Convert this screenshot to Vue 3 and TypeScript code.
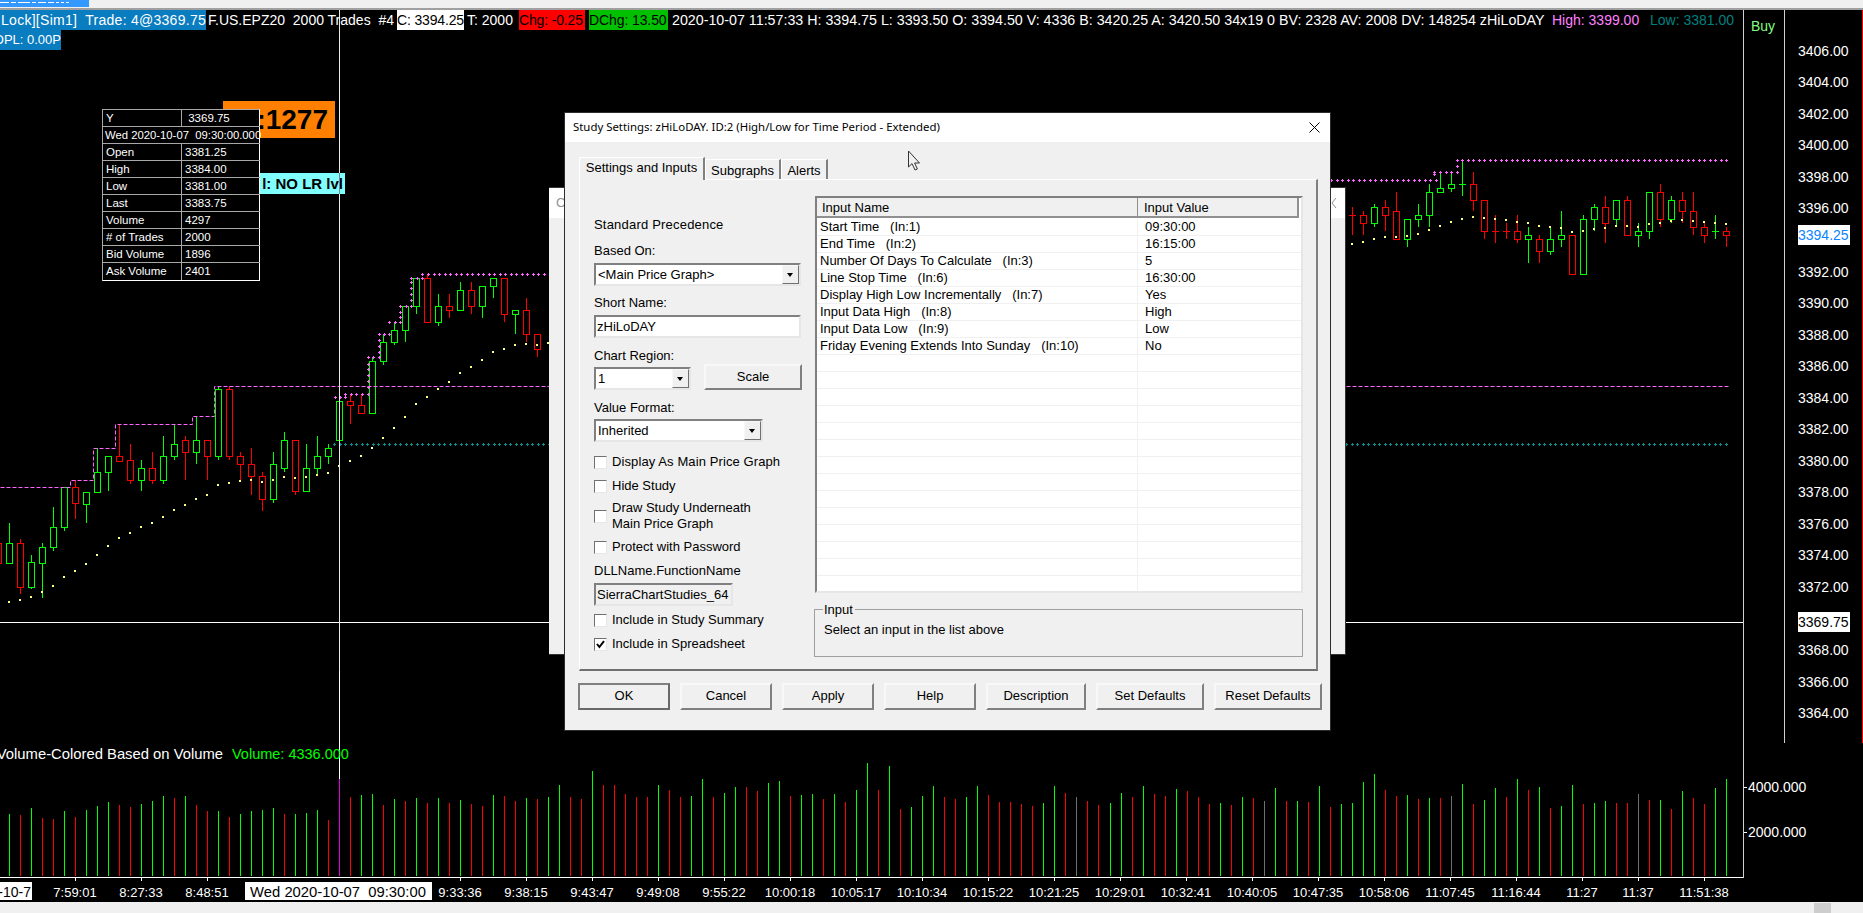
<template>
  <div class="app">
    <div class="top-strip">
      <div class="top-tab">
        <i v-for="(d, n) in tabDashes" :key="n" class="tab-dash" :style="{ width: d + 'px' }"></i>
      </div>
    </div>

    <div class="workspace">
      <svg class="chart" width="1863" height="892" viewBox="0 10 1863 892">
        <!-- volume pane -->
        <rect
          v-for="b in volumeBars"
          :key="b.i"
          :x="b.x"
          :y="b.y"
          width="1"
          :height="876 - b.y"
          :fill="b.fill"
        />

        <!-- candles -->
        <g v-for="c in candles" :key="c.i">
          <rect :x="c.x" :y="c.wickTop" width="1" :height="c.wickBot - c.wickTop" :fill="c.color" />
          <rect v-if="c.doji" :x="c.x - 3" :y="c.top" width="7" height="1" :fill="c.color" />
          <rect
            v-else
            :x="c.x - 2.5"
            :y="c.top + 0.5"
            width="6"
            :height="c.bot - c.top"
            fill="#000"
            :stroke="c.color"
            stroke-width="1"
          />
        </g>

        <!-- study lines -->
        <path :d="highStepLine" class="dashed" />
        <path :d="highMarkers" class="marker marker-high" />
        <path :d="lowMarkers" class="marker marker-low" />
        <rect
          v-for="(d, n) in dots"
          :key="n"
          :x="d[0] - 1"
          :y="d[1] - 1"
          width="2"
          height="2"
          fill="#ffff80"
        />

        <!-- crosshair -->
        <rect x="0" y="622" width="1743" height="1" fill="#fff" />
        <rect x="339" y="10" width="1" height="661" fill="#e8e8e8" />
        <rect x="339" y="671" width="1" height="108" fill="#fff" />
        <rect x="339" y="779" width="1" height="97" fill="#e000e0" />

        <!-- frame -->
        <rect x="0" y="877" width="1744" height="1" fill="#fff" />
        <rect x="1743" y="10" width="1" height="868" fill="#d0d0d0" />
        <rect x="1784" y="10" width="1" height="733" fill="#d0d0d0" />
        <rect x="1862" y="10" width="1" height="733" fill="#ff0000" />

        <!-- price axis -->
        <text v-for="p in prices" :key="p.label" x="1798" :y="p.y + 5" class="axis-label">{{ p.label }}</text>
        <rect x="1798" y="225" width="52" height="20" fill="#fff" />
        <text x="1798" y="240" class="axis-label axis-last">3394.25</text>
        <rect x="1798" y="612" width="52" height="20" fill="#fff" />
        <text x="1798" y="627" class="axis-label axis-cross">3369.75</text>

        <!-- volume axis -->
        <rect x="1744" y="787" width="3" height="1" fill="#fff" />
        <rect x="1744" y="832" width="3" height="1" fill="#fff" />
        <text x="1748" y="792" class="axis-label">4000.000</text>
        <text x="1748" y="837" class="axis-label">2000.000</text>

        <!-- time axis -->
        <g v-for="t in times" :key="t.label">
          <rect :x="t.x" y="878" width="1" height="3" fill="#fff" />
          <text :x="t.x" y="897" text-anchor="middle" class="time-label">{{ t.label }}</text>
        </g>
        <rect x="0" y="882" width="32" height="18" fill="#fff" />
        <text x="31" y="897" text-anchor="end" class="time-label time-dark time-left">-10-7</text>
        <rect x="245" y="882" width="187" height="18" fill="#fff" />
        <text x="338" y="897" text-anchor="middle" class="time-label time-dark time-cross">{{ crossTime }}</text>

        <!-- pane titles -->
        <text x="223" y="759" text-anchor="end" class="pane-title">Volume-Colored Based on Volume</text>
        <text x="232" y="759" class="pane-title pane-value">Volume: 4336.000</text>
        <text x="1751" y="31" class="buy">Buy</text>
      </svg>

      <div class="header-row">
        <span class="cell cell-blue cell-account"><span>{{ accountText }}</span></span>
        <span class="cell cell-symbol">{{ symbolText }}</span>
        <span class="cell cell-white">C: 3394.25</span>
        <span class="cell cell-trades">T: 2000</span>
        <span class="cell cell-red">Chg: -0.25</span>
        <span class="cell cell-green">DChg: 13.50</span>
        <span class="cell cell-stats">2020-10-07 11:57:33 H: 3394.75 L: 3393.50 O: 3394.50 V: 4336 B: 3420.25 A: 3420.50 34x19 0 BV: 2328 AV: 2008 DV: 148254 zHiLoDAY</span>
        <span class="cell cell-high">High: 3399.00</span>
        <span class="cell cell-low">Low: 3381.00</span>
      </div>
      <div class="header-row">
        <span class="cell cell-blue cell-opl"><span>OPL: 0.00P</span></span>
      </div>
    </div>

    <div class="status-bar">
      <div class="status-thumb"></div>
    </div>

    <!-- chart drawings under the study window -->
    <div class="tag-orange">T:1277</div>
    <div class="tag-cyan">l: NO LR lvl</div>
    <div class="crosshair-over"></div>

    <div class="values-window">
      <template v-for="r in windowRows" :key="r[0]">
        <div v-if="r[1] === ''" class="values-wide">{{ r[0] }}</div>
        <template v-else>
          <div class="values-name">{{ r[0] }}</div>
          <div class="values-num">{{ r[1] }}</div>
        </template>
      </template>
    </div>

    <div class="back-dialog">
      <div class="back-title">C</div>
      <svg class="back-close" width="6" height="12" viewBox="0 0 6 12">
        <path d="M5 1 L1 6 L5 11" fill="none" stroke="#909090" />
      </svg>
    </div>

    <!-- study settings window -->
    <div class="dialog">
      <div class="title-bar">
        <span class="title-text">Study Settings: zHiLoDAY. ID:2 (High/Low for Time Period - Extended)</span>
        <svg class="title-close" width="11" height="11" viewBox="0 0 11 11">
          <path d="M0.5 0.5 L10.5 10.5 M10.5 0.5 L0.5 10.5" stroke="#000" fill="none" />
        </svg>
      </div>

      <div class="dialog-body">
        <div class="tabs">
          <div class="tab tab-active">Settings and Inputs</div>
          <div class="tab tab-sub">Subgraphs</div>
          <div class="tab tab-alerts">Alerts</div>
        </div>

        <div class="pane">
          <div class="left-col">
            <div class="label l-std">Standard Precedence</div>
            <div class="label l-based">Based On:</div>
            <div class="field select s-based">
              <span>&lt;Main Price Graph&gt;</span>
              <i class="drop"></i>
            </div>
            <div class="label l-gap">Short Name:</div>
            <div class="field s-short"><span>zHiLoDAY</span></div>
            <div class="label l-based">Chart Region:</div>
            <div class="region-row">
              <div class="field select s-region">
                <span>1</span>
                <i class="drop"></i>
              </div>
              <div class="btn btn-scale">Scale</div>
            </div>
            <div class="label l-based">Value Format:</div>
            <div class="field select s-format">
              <span>Inherited</span>
              <i class="drop"></i>
            </div>

            <label class="check c-first"><i class="box"></i>Display As Main Price Graph</label>
            <label class="check c-hide"><i class="box"></i>Hide Study</label>
            <label class="check c-draw"><i class="box"></i><span>Draw Study Underneath<br />Main Price Graph</span></label>
            <label class="check c-protect"><i class="box"></i>Protect with Password</label>
            <div class="label c-dll">DLLName.FunctionName</div>
            <div class="field s-dll"><span>SierraChartStudies_64</span></div>
            <label class="check c-summary"><i class="box"></i>Include in Study Summary</label>
            <label class="check c-sheet">
              <i class="box">
                <svg width="9" height="9" viewBox="0 0 9 9">
                  <path d="M1 4 L3.4 7 L8 1.2" fill="none" stroke="#000" stroke-width="2" />
                </svg>
              </i>Include in Spreadsheet
            </label>
          </div>

          <div class="right-col">
            <div class="list">
              <div class="list-head">
                <span class="head-name">Input Name</span>
                <span class="head-value">Input Value</span>
              </div>
              <div v-for="(row, n) in inputRows" :key="n" class="list-row">
                <span class="cell-name">{{ row[0] }}</span>
                <span class="cell-value">{{ row[1] }}</span>
              </div>
            </div>
            <div class="group">
              <span class="group-title">Input</span>
              <span>Select an input in the list above</span>
            </div>
          </div>
        </div>

        <div class="buttons">
          <div class="btn btn-main btn-default">OK</div>
          <div class="btn btn-main">Cancel</div>
          <div class="btn btn-main">Apply</div>
          <div class="btn btn-main">Help</div>
          <div class="btn btn-desc">Description</div>
          <div class="btn btn-wide">Set Defaults</div>
          <div class="btn btn-wide">Reset Defaults</div>
        </div>
      </div>
    </div>

    <svg class="cursor" width="14" height="22" viewBox="0 0 14 22">
      <path d="M1.5 1 V17 L5 13.6 L8 20 L10.4 19 L7.6 13 H12.5 Z" fill="#f0f0f0" stroke="#333" />
    </svg>
  </div>
</template>

<script setup lang="ts">
type Candle = [string, number, number, number, number];

const tabDashes = [9, 5, 12, 4, 8, 6, 3, 3, 3];

// double spaces have to survive the template compiler
const accountText = "Lock][Sim1]  Trade: 4@3369.75";
const symbolText = "F.US.EPZ20  2000 Trades  #4";
const crossTime = "Wed 2020-10-07  09:30:00";

const barX = (i: number) => Math.round(9 + 11.005 * i);

// candle rows: colour, body top, body bottom, wick top, wick bottom (crop units)
const leftCandles: Candle[] = [
  ["r", 880, 938, 880, 938], ["g", 880, 938, 820, 938], ["r", 880, 1010, 868, 1032], ["g", 937, 1010, 915, 1018],
  ["g", 892, 938, 880, 1044], ["g", 832, 892, 771, 903], ["g", 712, 832, 712, 843], ["r", 712, 760, 690, 807],
  ["g", 725, 761, 725, 819], ["g", 667, 725, 595, 725], ["g", 619, 667, 619, 723], ["r", 619, 632, 523, 632],
  ["r", 631, 691, 582, 701], ["g", 655, 691, 630, 723], ["r", 655, 691, 606, 701], ["g", 619, 691, 558, 701],
  ["g", 583, 619, 522, 629], ["r", 571, 607, 558, 690], ["g", 571, 607, 498, 642], ["r", 571, 619, 571, 690],
  ["g", 418, 619, 407, 629], ["r", 418, 619, 407, 629], ["r", 619, 643, 606, 690], ["r", 643, 679, 594, 735],
  ["r", 679, 748, 667, 783], ["g", 643, 748, 606, 758], ["g", 571, 655, 546, 665], ["r", 571, 724, 571, 735],
  ["g", 655, 724, 582, 724], ["g", 619, 655, 558, 677], ["g", 595, 619, 583, 642], ["g", 454, 571, 454, 583],
  ["r", 454, 466, 431, 522], ["r", 466, 490, 431, 490], ["g", 334, 490, 322, 490], ["g", 277, 334, 253, 345],
  ["g", 241, 277, 217, 285], ["g", 169, 241, 169, 276], ["g", 85, 169, 85, 192], ["r", 85, 217, 73, 217],
  ["g", 169, 217, 132, 228], ["r", 169, 181, 132, 204], ["g", 121, 181, 96, 181], ["r", 121, 169, 96, 192],
  ["g", 109, 169, 109, 204], ["g", 85, 109, 85, 144], ["r", 85, 193, 85, 216], ["g", 181, 193, 181, 252],
  ["r", 181, 253, 144, 276], ["r", 253, 298, 253, 320],
];

const rightCandles: Candle[] = [
  ["r", 226, 226, 201, 285], ["r", 226, 250, 213, 285], ["g", 202, 250, 192, 261], ["r", 202, 226, 180, 273],
  ["r", 214, 298, 156, 298], ["g", 238, 298, 238, 321], ["g", 226, 238, 192, 261], ["g", 157, 226, 132, 261],
  ["g", 145, 157, 97, 157], ["g", 133, 145, 97, 157], ["g", 133, 133, 61, 168], ["r", 133, 181, 96, 213],
  ["r", 181, 274, 181, 297], ["r", 274, 274, 225, 309], ["r", 274, 274, 249, 297], ["r", 274, 298, 225, 309],
  ["g", 286, 298, 261, 369], ["r", 298, 334, 285, 369], ["g", 298, 334, 261, 345], ["g", 286, 298, 213, 321],
  ["r", 286, 403, 286, 403], ["g", 238, 403, 225, 403], ["g", 202, 238, 192, 273], ["r", 202, 250, 168, 309],
  ["g", 181, 238, 181, 261], ["r", 181, 286, 168, 286], ["g", 274, 286, 249, 321], ["g", 157, 274, 157, 297],
  ["r", 157, 238, 132, 261], ["g", 181, 238, 168, 249], ["r", 181, 214, 156, 249], ["r", 214, 262, 156, 285],
  ["r", 262, 286, 249, 309], ["g", 274, 274, 225, 297], ["r", 274, 286, 261, 321],
];

const buildCandles = (rows: Candle[], startIndex: number, y0: number) =>
  rows.map((r, n) => {
    const i = startIndex + n;
    return {
      i,
      x: barX(i),
      color: r[0] === "g" ? "#00ff00" : "#ff0000",
      top: Math.round(y0 + r[1] / 3),
      bot: Math.round(y0 + r[2] / 3),
      wickTop: Math.round(y0 + r[3] / 3),
      wickBot: Math.round(y0 + r[4] / 3),
      doji: r[1] === r[2],
    };
  });

const candles = [...buildCandles(leftCandles, -1, 250), ...buildCandles(rightCandles, 122, 140)];

// volume pane, measured in three crops
const volumeSegment = (y0: number, colors: string, tops: number[]) =>
  tops.map((t, n) => ({ y: Math.round(y0 + t / 3), c: colors[n] }));

const rawVolume = [
  ...volumeSegment(730, "grgrrgrgggrrgggrgrrgrggggrgggrmrggrgrgrgrgrrgrrgrggrrgrrrrrgrr", [
    252, 255, 234, 264, 267, 243, 261, 240, 228, 216, 225, 231, 222, 213, 198, 204, 198, 225, 243, 243, 261, 252, 243,
    240, 234, 252, 252, 249, 240, 270, 150, 201, 195, 192, 225, 207, 213, 204, 219, 204, 219, 210, 222, 228, 195, 198,
    213, 204, 207, 201, 165, 201, 207, 123, 165, 165, 192, 201, 201, 165, 180, 201,
  ]),
  ...volumeSegment(760, "ggrggrrggrggrgrggrgrgggrrggrrrrr", [
    108, 57, 111, 99, 81, 81, 93, 69, 63, 108, 105, 102, 117, 102, 126, 90, 9, 90, 18, 147, 141, 108, 78, 111, 117, 111,
    78, 105, 126, 126, 132, 138,
  ]).slice(0, 31),
  ...volumeSegment(560, "rggrnrrggrgrrgrrrgrgrngrgrgrggggrrgrgrngrggrgrgrggrggrrnrgrgrrgg", [
    738, 729, 678, 699, 711, 723, 735, 729, 699, 711, 678, 702, 708, 687, 693, 711, 732, 729, 735, 711, 714, 723, 684,
    723, 723, 726, 678, 741, 732, 729, 666, 642, 690, 708, 705, 717, 714, 714, 708, 672, 732, 720, 684, 711, 657, 690,
    681, 744, 738, 675, 732, 729, 723, 729, 729, 702, 720, 720, 747, 693, 714, 732, 684, 657,
  ]),
];

const volumeFill: Record<string, string> = { g: "#00ff00", r: "#ff0000", n: "#707070", m: "#e000e0" };
const volumeBars = rawVolume.map((b, i) => ({ i, x: barX(i), y: b.y, fill: volumeFill[b.c] }));

// zHiLoDAY: dashed high steps, then plus markers while the day is building
const px = (z: number) => z / 2.75;
const py = (z: number) => Math.round(250 + z / 3);
const highStepLine =
  `M0 ${py(712)}H70V${py(690)}H93V${py(595)}H115V${py(523)}H192V${py(498)}H214V${py(407)}H549 ` +
  `M1346 ${py(407)}H1730`;

const plus = (x: number, y: number) => {
  const cx = Math.round(x) + 0.5;
  const cy = Math.round(y) + 0.5;
  return `M${cx - 1.5} ${cy}h3M${cx} ${cy - 1.5}v3`;
};

const highPoints: [number, number][] = [
  [920, 442], [935, 442], [950, 442], [950, 431], [965, 431], [980, 431], [996, 431], [1011, 431], [1011, 410],
  [1011, 392], [1011, 375], [1011, 358], [1011, 341], [1011, 322], [1026, 322], [1041, 322], [1041, 305], [1041, 287],
  [1041, 270], [1041, 253], [1056, 253], [1071, 253], [1071, 217], [1086, 217], [1101, 217], [1101, 201], [1101, 185],
  [1101, 169], [1116, 169], [1131, 169], [1131, 151], [1131, 133], [1131, 115], [1131, 97], [1131, 85], [1146, 85],
  [1161, 85], [1161, 73],
];

let highPath = highPoints.map((p) => plus(px(p[0]), py(p[1]))).join("");
for (let x = 428; x < 549; x += 5.5) highPath += plus(x, 274);
for (let x = 1331; x < 1436; x += 5.5) highPath += plus(x, 180);
highPath += plus(1434, 172) + plus(1434, 174);
for (let x = 1440; x < 1457; x += 5.5) highPath += plus(x, 172);
highPath += plus(1456.5, 166);
for (let x = 1456.5; x < 1727; x += 5.5) highPath += plus(x, 160);
const highMarkers = highPath;

let lowPath = "";
for (let x = 334; x < 549; x += 5.5) lowPath += plus(x, 444);
for (let x = 1346; x < 1729; x += 5.5) lowPath += plus(x, 444);
const lowMarkers = lowPath;

// trailing yellow dots
const leftDots = [
  1056, 1050, 1041, 1026, 1008, 981, 963, 942, 915, 888, 864, 849, 831, 819, 801, 780, 765, 747, 735, 705, 699, 693, 690,
  696, 690, 681, 684, 681, 675, 669, 648, 633, 618, 594, 564, 534, 501, 462, 441, 417, 396, 369, 351, 330, 306, 297, 285,
  282, 285, 279,
];
const rightDots = [
  312, 306, 297, 291, 291, 288, 282, 270, 258, 246, 237, 231, 234, 237, 240, 246, 249, 258, 261, 264, 276, 273, 267, 264,
  258, 258, 261, 252, 249, 243, 240, 243, 246, 249, 252,
];
const dots: [number, number][] = [
  ...leftDots.map((z, n): [number, number] => [barX(n), py(z)]),
  ...rightDots.map((z, n): [number, number] => [barX(122 + n), Math.round(140 + z / 3)]),
];

const priceRows: [string, number][] = [
  ["3406.00", 51], ["3404.00", 82], ["3402.00", 114], ["3400.00", 145], ["3398.00", 177], ["3396.00", 208],
  ["3392.00", 272], ["3390.00", 303], ["3388.00", 335], ["3386.00", 366], ["3384.00", 398], ["3382.00", 429],
  ["3380.00", 461], ["3378.00", 492], ["3376.00", 524], ["3374.00", 555], ["3372.00", 587], ["3368.00", 650],
  ["3366.00", 682], ["3364.00", 713],
];
const prices = priceRows.map(([label, y]) => ({ label, y }));

const timeRows: [string, number][] = [
  ["7:59:01", 75], ["8:27:33", 141], ["8:48:51", 207], ["9:33:36", 460], ["9:38:15", 526], ["9:43:47", 592],
  ["9:49:08", 658], ["9:55:22", 724], ["10:00:18", 790], ["10:05:17", 856], ["10:10:34", 922], ["10:15:22", 988],
  ["10:21:25", 1054], ["10:29:01", 1120], ["10:32:41", 1186], ["10:40:05", 1252], ["10:47:35", 1318],
  ["10:58:06", 1384], ["11:07:45", 1450], ["11:16:44", 1516], ["11:27", 1582], ["11:37", 1638], ["11:51:38", 1704],
];
const times = timeRows.map(([label, x]) => ({ label, x }));

const windowRows: [string, string][] = [
  ["Y", "\u00a03369.75"],
  ["Wed 2020-10-07  09:30:00.000", ""],
  ["Open", "3381.25"],
  ["High", "3384.00"],
  ["Low", "3381.00"],
  ["Last", "3383.75"],
  ["Volume", "4297"],
  ["# of Trades", "2000"],
  ["Bid Volume", "1896"],
  ["Ask Volume", "2401"],
];

const inputRows: [string, string][] = [
  ["Start Time   (In:1)", "09:30:00"],
  ["End Time   (In:2)", "16:15:00"],
  ["Number Of Days To Calculate   (In:3)", "5"],
  ["Line Stop Time   (In:6)", "16:30:00"],
  ["Display High Low Incrementally   (In:7)", "Yes"],
  ["Input Data High   (In:8)", "High"],
  ["Input Data Low   (In:9)", "Low"],
  ["Friday Evening Extends Into Sunday   (In:10)", "No"],
  ...Array.from({ length: 14 }, (): [string, string] => ["", ""]),
];
</script>

<style scoped>
.app {
  position: relative;
  display: flex;
  flex-direction: column;
  width: 1863px;
  height: 913px;
  overflow: hidden;
  background: #000;
  font-family: "Liberation Sans", Arial, sans-serif;
  font-size: 13px;
  color: #000;
}

.top-strip {
  flex: none;
  height: 8px;
  background: #f0f0f0;
  border-bottom: 2px solid #a0a0a0;
}

.top-tab {
  display: flex;
  gap: 2px;
  align-items: flex-start;
  width: 89px;
  height: 7px;
  padding-top: 2px;
  box-sizing: border-box;
  background: #3399ff;
  overflow: hidden;
}

.tab-dash {
  display: block;
  height: 1px;
  background: #fff;
}

.workspace {
  position: relative;
  flex: 1;
  min-height: 0;
}

.chart {
  position: absolute;
  inset: 0;
  display: block;
}

.header-row {
  position: relative;
  display: flex;
  height: 20px;
  font-size: 14px;
  line-height: 20px;
  white-space: pre;
  color: #fff;
}

.cell {
  flex: none;
  height: 20px;
  overflow: hidden;
}

.cell-blue {
  background: #0a7cc0;
}

.cell-account {
  display: flex;
  justify-content: flex-end;
  width: 206px;
  box-sizing: border-box;
  letter-spacing: 0.27px;
}

.cell-account > span {
  flex: none;
}

.cell-symbol {
  width: 191px;
  padding-left: 2px;
  box-sizing: border-box;
}

.cell-white {
  width: 67px;
  background: #fff;
  color: #000;
  letter-spacing: -0.15px;
}

.cell-trades {
  width: 55px;
  padding-left: 3px;
  box-sizing: border-box;
}

.cell-red {
  width: 66px;
  margin-right: 4px;
  background: #ff0000;
  color: #000;
  letter-spacing: -0.15px;
}

.cell-green {
  width: 79px;
  background: #00c000;
  color: #000;
  letter-spacing: -0.1px;
}

.cell-stats {
  width: 884px;
  padding-left: 4px;
  box-sizing: border-box;
  font-size: 14.25px;
}

.cell-high {
  width: 98px;
  color: #ff80ff;
}

.cell-low {
  width: 90px;
  color: #008080;
}

.cell-opl {
  display: flex;
  justify-content: flex-end;
  width: 61px;
  font-size: 13px;
}

.cell-opl > span {
  flex: none;
}

.dashed {
  fill: none;
  stroke: #ff66ff;
  stroke-width: 1;
  stroke-dasharray: 4 2;
  transform: translate(0.5px, 0.5px);
}

.marker {
  fill: none;
  stroke-width: 1;
}

.marker-high {
  stroke: #ff66ff;
}

.marker-low {
  stroke: #0a8a8a;
}

.axis-label {
  font-size: 14px;
  fill: #fff;
}

.axis-last {
  fill: #0a84ff;
}

.axis-cross {
  fill: #000;
}

.time-label {
  font-size: 13px;
  fill: #fff;
}

.time-dark {
  fill: #000;
}

.time-left {
  font-size: 14px;
}

.time-cross {
  font-size: 14.8px;
  white-space: pre;
}

.pane-title {
  font-size: 14.8px;
  fill: #fff;
}

.pane-value {
  font-size: 14.5px;
  fill: #00ff00;
}

.buy {
  font-size: 14px;
  fill: #80ff80;
}

.status-bar {
  position: relative;
  flex: none;
  height: 11px;
  background: #f0f0f0;
}

.status-thumb {
  position: absolute;
  left: 1814px;
  top: 1px;
  width: 17px;
  height: 10px;
  background: #cdcdcd;
}

.tag-orange {
  position: absolute;
  left: 223px;
  top: 101px;
  width: 112px;
  height: 37px;
  padding-right: 7px;
  box-sizing: border-box;
  background: #ff8000;
  font-size: 28px;
  font-weight: 700;
  line-height: 37px;
  text-align: right;
}

.tag-cyan {
  position: absolute;
  left: 223px;
  top: 173px;
  width: 122px;
  height: 21px;
  padding-right: 2px;
  box-sizing: border-box;
  background: #80ffff;
  font-size: 15px;
  font-weight: 700;
  line-height: 21px;
  text-align: right;
  white-space: nowrap;
}

.crosshair-over {
  position: absolute;
  left: 339px;
  top: 173px;
  width: 1px;
  height: 21px;
  background: #808080;
}

.values-window {
  position: absolute;
  left: 102px;
  top: 109px;
  display: grid;
  grid-template-columns: 79px 78px;
  grid-auto-rows: 17px;
  width: 158px;
  box-sizing: border-box;
  background: #000;
  border: 1px solid #a8a8a8;
  border-right-color: #fff;
  border-bottom-color: #fff;
  font-size: 11.5px;
  line-height: 16px;
  color: #fff;
  white-space: pre;
}

.values-name {
  padding-left: 3px;
  border-right: 1px solid #a8a8a8;
  border-bottom: 1px solid #a8a8a8;
}

.values-num {
  padding-left: 3px;
  border-bottom: 1px solid #a8a8a8;
}

.values-wide {
  grid-column: 1 / 3;
  padding-left: 2px;
  border-bottom: 1px solid #a8a8a8;
  font-size: 11.3px;
}

.values-window > :nth-last-child(-n + 2) {
  border-bottom: 0;
}

.back-dialog {
  position: absolute;
  left: 549px;
  top: 187px;
  width: 797px;
  height: 468px;
  box-sizing: border-box;
  background: #f0f0f0;
  border-top: 1px solid #333;
  border-right: 1px solid #333;
  border-bottom: 1px solid #333;
}

.back-title {
  height: 30px;
  padding-left: 7px;
  background: #fff;
  font-size: 13px;
  line-height: 30px;
  color: #909090;
}

.back-close {
  position: absolute;
  left: 782px;
  top: 9px;
}

.dialog {
  position: absolute;
  left: 564px;
  top: 112px;
  display: flex;
  flex-direction: column;
  width: 767px;
  height: 619px;
  box-sizing: border-box;
  background: #f0f0f0;
  border: 1px solid #2c2c2c;
}

.title-bar {
  flex: none;
  display: flex;
  align-items: center;
  justify-content: space-between;
  height: 29px;
  padding: 0 10px 0 8px;
  background: #fff;
}

.title-text {
  padding-bottom: 2px;
  font-family: "Noto Sans", "Open Sans", sans-serif;
  font-size: 11.4px;
  color: #000;
}

.dialog-body {
  flex: 1;
  padding: 15px 0 0 13px;
}

.tabs {
  display: flex;
  align-items: flex-end;
  height: 22px;
  margin-left: 1px;
}

.tab {
  height: 20px;
  line-height: 20px;
  text-align: center;
  background: #f0f0f0;
  box-sizing: border-box;
  border-top: 1px solid #fff;
  border-left: 1px solid #fff;
  border-right: 2px solid #808080;
}

.tab-active {
  position: relative;
  top: 1px;
  width: 126px;
  height: 23px;
  line-height: 19px;
  padding-bottom: 2px;
}

.tab-sub {
  width: 76px;
  line-height: 21px;
}

.tab-alerts {
  width: 47px;
  line-height: 21px;
}

.pane {
  display: flex;
  width: 739px;
  height: 492px;
  margin-left: 1px;
  padding: 16px 0 0 14px;
  box-sizing: border-box;
  border-top: 1px solid #fff;
  border-left: 1px solid #fff;
  border-right: 2px solid #808080;
  border-bottom: 2px solid #707070;
}

.left-col {
  flex: none;
  width: 220px;
}

.label {
  height: 16px;
  line-height: 16px;
  white-space: nowrap;
}

.l-std {
  margin-top: 21px;
  letter-spacing: 0.2px;
}

.l-based {
  margin-top: 10px;
}

.l-gap {
  margin-top: 9px;
}

.field {
  position: relative;
  display: flex;
  align-items: center;
  box-sizing: border-box;
  margin-top: 4px;
  padding-left: 2px;
  background: #fff;
  border: 2px solid;
  border-color: #808080 #e6e6e6 #e6e6e6 #808080;
  white-space: nowrap;
}

.s-based {
  width: 207px;
  height: 23px;
}

.s-short {
  width: 207px;
  height: 23px;
  padding-left: 1px;
}

.region-row {
  display: flex;
  align-items: flex-end;
  gap: 13px;
  height: 26px;
}

.s-region {
  width: 97px;
  height: 23px;
  margin-top: 0;
}

.s-format {
  width: 169px;
  height: 23px;
  margin-top: 3px;
}

.s-dll {
  width: 139px;
  height: 23px;
  padding-left: 1px;
  background: #f0f0f0;
}

.drop {
  position: absolute;
  top: 0;
  right: 0;
  bottom: 0;
  width: 17px;
  box-sizing: border-box;
  background: #f0f0f0;
  border: 1px solid;
  border-color: #f8f8f8 #707070 #707070 #f8f8f8;
}

.drop::after {
  content: "";
  position: absolute;
  left: 4px;
  top: 7px;
  border-left: 3.5px solid transparent;
  border-right: 3.5px solid transparent;
  border-top: 4px solid #000;
}

.check {
  display: flex;
  align-items: center;
  height: 16px;
  white-space: nowrap;
  line-height: 16px;
}

.box {
  flex: none;
  display: flex;
  align-items: center;
  justify-content: center;
  width: 13px;
  height: 13px;
  margin-right: 5px;
  box-sizing: border-box;
  background: #fff;
  border: 1px solid;
  border-color: #707070 #e6e6e6 #e6e6e6 #707070;
}

.c-first {
  margin-top: 12px;
  letter-spacing: 0.1px;
}

.c-hide {
  margin-top: 8px;
}

.c-draw {
  height: 32px;
  margin-top: 6px;
}

.c-protect {
  margin-top: 7px;
}

.c-dll {
  margin-top: 8px;
}

.c-summary {
  margin-top: 6px;
}

.c-sheet {
  margin-top: 8px;
}

.right-col {
  flex: none;
  width: 489px;
}

.list {
  width: 488px;
  height: 397px;
  margin-left: 1px;
  box-sizing: border-box;
  overflow: hidden;
  background: #fff;
  border: 2px solid;
  border-color: #808080 #e6e6e6 #e6e6e6 #808080;
}

.list-head {
  display: flex;
  height: 20px;
  width: 482px;
  box-sizing: border-box;
  margin-bottom: 1px;
  line-height: 19px;
  background: #f0f0f0;
  border-bottom: 2px solid #909090;
  border-right: 2px solid #909090;
}

.head-name {
  width: 321px;
  padding-left: 5px;
  box-sizing: border-box;
  border-right: 1px solid #909090;
}

.head-value {
  padding-left: 6px;
}

.list-row {
  display: flex;
  height: 17px;
  line-height: 16px;
  box-sizing: border-box;
  border-bottom: 1px solid #f0f0f0;
  white-space: pre;
}

.cell-name {
  width: 321px;
  padding-left: 3px;
  box-sizing: border-box;
  border-right: 1px solid #f0f0f0;
}

.cell-value {
  padding-left: 7px;
}

.group {
  position: relative;
  display: flex;
  align-items: flex-start;
  width: 489px;
  height: 48px;
  margin-top: 16px;
  padding: 12px 0 0 9px;
  box-sizing: border-box;
  border: 1px solid #a0a0a0;
}

.group-title {
  position: absolute;
  left: 8px;
  top: -8px;
  padding: 0 2px 0 1px;
  line-height: 16px;
  background: #f0f0f0;
}

.btn {
  box-sizing: border-box;
  display: flex;
  align-items: center;
  justify-content: center;
  flex: none;
  padding-bottom: 2px;
  background: #f0f0f0;
  border: 2px solid;
  border-color: #f8f8f8 #808080 #808080 #f8f8f8;
}

.btn-scale {
  width: 98px;
  height: 26px;
}

.buttons {
  display: flex;
  gap: 10px;
  margin-top: 12px;
}

.btn-main {
  width: 92px;
  height: 27px;
}

.btn-default {
  border-color: #808080 #696969 #696969 #808080;
}

.btn-desc {
  width: 100px;
  height: 27px;
}

.btn-wide {
  width: 108px;
  height: 27px;
}

.cursor {
  position: absolute;
  left: 907px;
  top: 150px;
}
</style>
